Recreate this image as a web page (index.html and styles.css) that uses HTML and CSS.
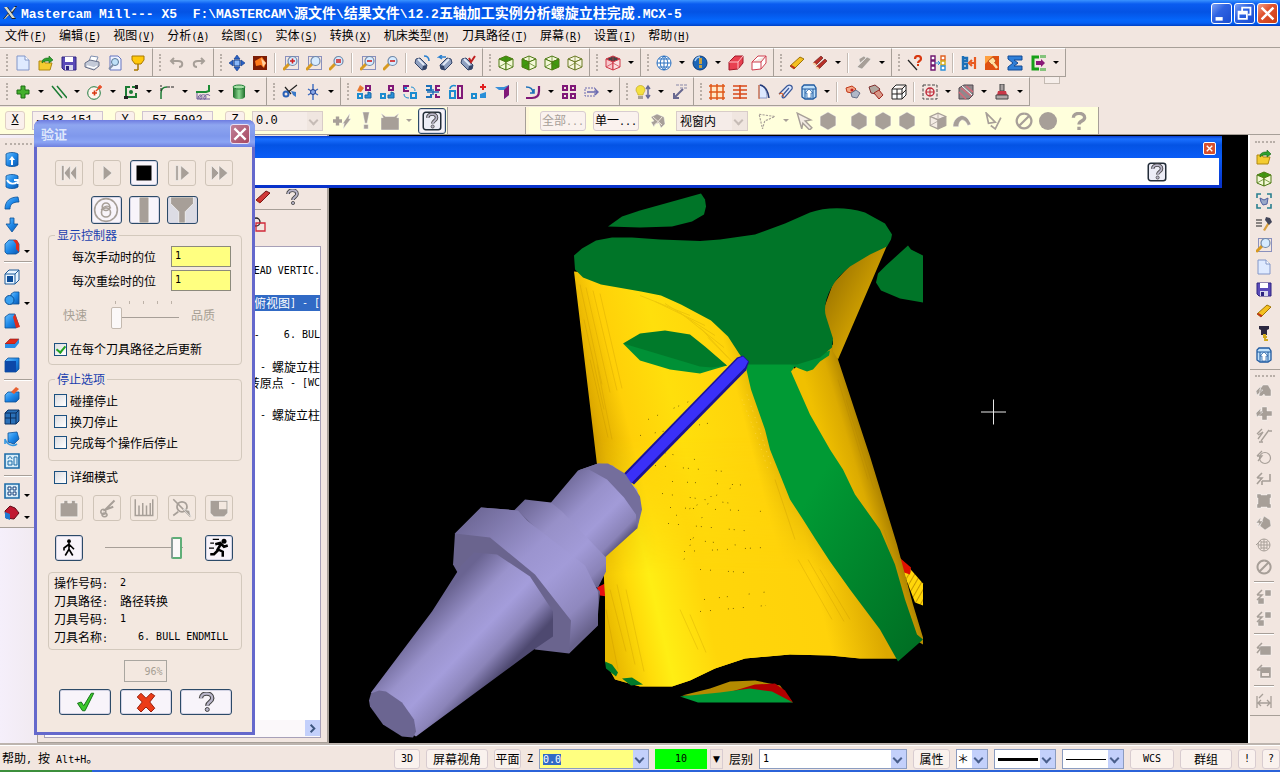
FILE: index.html
```html
<!DOCTYPE html>
<html lang="zh-CN">
<head>
    <meta charset="UTF-8">
    <meta name="viewport" content="width=device-width, initial-scale=1.0">
    <title>Mastercam Mill--- X5</title>
    <link rel="stylesheet" href="styles.css">
</head>
<body>

<header class="titlebar">
    <svg class="app-logo" viewBox="0 0 16 16"><path d="M2 2h4l3 5 4-6h2L10 9l4 5h-4L7 10l-4 4H1l5-6z" fill="#222"/><path d="M2 2h3l8 11h-3zM12 2h2l-4 5-1-1zM2 14l4-5 1 1-4 4z" fill="#d8dccf"/></svg>
    <h1><span class="en">Mastercam Mill--- X5&nbsp; F:\MASTERCAM\</span>源文件<span class="en">\</span>结果文件<span class="en">\12.2</span>五轴加工实例分析螺旋立柱完成<span class="en">.MCX-5</span></h1>
    <div class="win-buttons">
        <button class="win-btn" aria-label="minimize"><svg viewBox="0 0 16 16"><path d="M3 11h6v3H3z" fill="#fff"/></svg></button>
        <button class="win-btn" aria-label="restore"><svg viewBox="0 0 16 16" fill="none" stroke="#fff" stroke-width="1.500"><path d="M6 6V3h7v6h-2M3 6.500h7v6H3zM3 8h7"/></svg></button>
        <button class="win-btn close" aria-label="close"><svg viewBox="0 0 16 16"><path d="M3 3l10 10M13 3L3 13" stroke="#fff" stroke-width="2"/></svg></button>
    </div>
</header>

<nav class="menubar">
    <a href="#">文件<span class="en">(<u>F</u>)</span></a>
    <a href="#">编辑<span class="en">(<u>E</u>)</span></a>
    <a href="#">视图<span class="en">(<u>V</u>)</span></a>
    <a href="#">分析<span class="en">(<u>A</u>)</span></a>
    <a href="#">绘图<span class="en">(<u>C</u>)</span></a>
    <a href="#">实体<span class="en">(<u>S</u>)</span></a>
    <a href="#">转换<span class="en">(<u>X</u>)</span></a>
    <a href="#">机床类型<span class="en">(<u>M</u>)</span></a>
    <a href="#">刀具路径<span class="en">(<u>T</u>)</span></a>
    <a href="#">屏幕<span class="en">(<u>R</u>)</span></a>
    <a href="#">设置<span class="en">(<u>I</u>)</span></a>
    <a href="#">帮助<span class="en">(<u>H</u>)</span></a>
</nav>

<!-- a * after an icon name adds the drop-down arrow, | is a separator -->
<div class="toolbar-row">
    <div class="group" data-icons="new open save print preview pin"></div>
    <div class="group" data-icons="undo redo"></div>
    <div class="group" data-icons="fit repaint | zoomWin zoomTarget zoomEq | unzoomWin unzoom | viewPen1 viewPen2 viewPen3"></div>
    <div class="group" data-icons="cubeTop cubeFront cubeRight cubeIso"></div>
    <div class="group" data-icons="cubeRed*"></div>
    <div class="group" data-icons="globe* ball* solidRed wireRed"></div>
    <div class="group" data-icons="erase eraseAll* | eraseGray*"></div>
    <div class="group" data-icons="lineHelp columns | analyze hammer sigma exit*"></div>
</div>

<div class="toolbar-row">
    <div class="group" data-icons="plus* lines* arc* rect* fillet* spline* cylinder*"></div>
    <div class="group" data-icons="trim breaks*"></div>
    <div class="group" data-icons="xform1 xform2 xform3 mirror scale move3d wedge | offset* nest rolled*"></div>
    <div class="group" data-icons="bulb* arrowNote"></div>
    <div class="group" data-icons="surfGrid surfLines surfHalf surfRoll surfUp* | machine1 machine2 wireCube | target* stock* post*"></div>
    <div class="stub"></div>
</div>

<div class="toolbar-row coords">
    <div class="coord-bar">
        <label class="key" for="cx"><u>X</u></label><input id="cx" class="coord" value="-513.151">
        <label class="key" for="cy"><u>Y</u></label><input id="cy" class="coord" value="-57.5992">
        <label class="key" for="cz"><u>Z</u></label>
        <span class="combo off coord-z"><select id="cz"><option>0.0</option></select></span>
        <span class="flat wide" data-icons="fastPoint bang android*"></span>
        <button class="icon-btn bar-help" data-icon="helpBox" aria-label="help"></button>
    </div>
    <div class="empty-bar"></div>
    <div class="select-bar">
        <button class="pill" disabled>全部<span class="en">...</span></button>
        <button class="pill">单一<span class="en">...</span></button>
        <span class="flat" data-icons="gyroGray"></span>
        <span class="combo off window-mode"><select aria-label="选择方式"><option>视窗内</option></select></span>
        <span class="flat wide" data-icons="polyGray* pointer hexGray"></span>
        <span class="flat wide" data-icons="hexGray hexGray hexGray"></span>
        <span class="flat wide" data-icons="cubeGray bendGray"></span>
        <span class="flat wide" data-icons="pickGray"></span>
        <span class="flat wide" data-icons="noGray discGray"></span>
        <span class="flat wide" data-icons="askGray"></span>
    </div>
</div>

<main class="workspace">
    <aside class="side left">
        <div class="vgroup" data-icons="sUp sTurn sSweep sDown sBox* | sShell sBool* sDraft sThin sBlock | sPush sGrid sRotate sLayout | sTiles* sRed*"></div>
    </aside>

    <section class="manager">
        <div class="manager-tools">
            <div class="flat" data-icons="eraseRed help"></div>
            <div class="flat" data-icons="chainRed"></div>
        </div>
        <ul class="tree">
            <li></li>
            <li><span class="en">HEAD VERTIC.</span></li>
            <li></li>
            <li class="picked">俯视图<span class="en">] - [</span></li>
            <li></li>
            <li><span class="en">-&nbsp;&nbsp;&nbsp; 6. BUL</span></li>
            <li></li>
            <li><span class="en">E - </span>螺旋立柱</li>
            <li>转原点<span class="en"> - [WC</span></li>
            <li></li>
            <li><span class="en">E - </span>螺旋立柱</li>
        </ul>
        <div class="hscroll"><button aria-label="scroll right"><svg viewBox="0 0 16 16"><path d="M6 4l4 4-4 4" fill="none" stroke="#3b557f" stroke-width="2"/></svg></button></div>
    </section>

    <section class="viewport">
        <svg class="scene" viewBox="329 136 919 607">
            <defs>
                <linearGradient id="body" gradientUnits="userSpaceOnUse" x1="577" y1="420" x2="890" y2="340">
                    <stop offset="0" stop-color="#bd8a00"/><stop offset=".06" stop-color="#e0ac00"/><stop offset=".15" stop-color="#ffd008"/>
                    <stop offset=".3" stop-color="#ffdf0c"/><stop offset=".5" stop-color="#ffd40a"/><stop offset=".62" stop-color="#c99a00"/><stop offset="1" stop-color="#c99a00"/>
                </linearGradient>
                <linearGradient id="low" gradientUnits="userSpaceOnUse" x1="600" y1="600" x2="860" y2="540">
                    <stop offset="0" stop-color="#e8b800"/><stop offset=".12" stop-color="#ffdc0a"/><stop offset=".2" stop-color="#ffee14"/>
                    <stop offset=".38" stop-color="#ffd60a"/><stop offset=".8" stop-color="#ffd20a"/><stop offset="1" stop-color="#dba800"/>
                </linearGradient>
                <linearGradient id="fade" x1="0" y1="0" x2="0" y2="1"><stop offset=".45" stop-color="#000"/><stop offset=".75" stop-color="#fff"/></linearGradient>
                <mask id="lowMask"><rect x="560" y="230" width="380" height="460" fill="url(#fade)"/></mask>
                <linearGradient id="right" gradientUnits="userSpaceOnUse" x1="825" y1="450" x2="872" y2="436">
                    <stop offset="0" stop-color="#f0c000"/><stop offset=".5" stop-color="#dcab00"/><stop offset="1" stop-color="#9a7200"/>
                </linearGradient>
                <linearGradient id="inner" gradientUnits="userSpaceOnUse" x1="826" y1="290" x2="868" y2="312">
                    <stop offset="0" stop-color="#a07700"/><stop offset=".6" stop-color="#bf9200"/><stop offset="1" stop-color="#d3a300"/>
                </linearGradient>
                <linearGradient id="slot" x1="0" y1="0" x2="1" y2="1"><stop offset=".4" stop-color="#009a34"/><stop offset="1" stop-color="#006b22"/></linearGradient>
                <linearGradient id="taper" gradientUnits="userSpaceOnUse" x1="428" y1="612" x2="498" y2="678">
                    <stop offset="0" stop-color="#6a6492"/><stop offset=".3" stop-color="#9a93cc"/><stop offset=".55" stop-color="#a49ddb"/><stop offset=".8" stop-color="#8b84b9"/><stop offset="1" stop-color="#4e4970"/>
                </linearGradient>
                <linearGradient id="flange" gradientUnits="userSpaceOnUse" x1="480" y1="510" x2="590" y2="630">
                    <stop offset="0" stop-color="#706a99"/><stop offset=".4" stop-color="#9b94cf"/><stop offset=".6" stop-color="#a29bd8"/><stop offset=".85" stop-color="#8f88be"/><stop offset="1" stop-color="#68628c"/>
                </linearGradient>
                <linearGradient id="collar" gradientUnits="userSpaceOnUse" x1="520" y1="505" x2="605" y2="595">
                    <stop offset="0" stop-color="#6c6694"/><stop offset=".3" stop-color="#9790c8"/><stop offset=".6" stop-color="#a29bd8"/><stop offset=".82" stop-color="#8a83b8"/><stop offset="1" stop-color="#4a4568"/>
                </linearGradient>
                <linearGradient id="neck" gradientUnits="userSpaceOnUse" x1="560" y1="484" x2="625" y2="548">
                    <stop offset="0" stop-color="#6f6998"/><stop offset=".35" stop-color="#9891cb"/><stop offset=".6" stop-color="#a29bd8"/><stop offset=".85" stop-color="#8a83b8"/><stop offset="1" stop-color="#3f3a5c"/>
                </linearGradient>
                <pattern id="stripes" width="5" height="5" patternUnits="userSpaceOnUse" patternTransform="rotate(-60)"><path d="M0 0h5v4H0z" fill="#ffd60a"/><path d="M0 4h5v1H0z" fill="#c89800"/></pattern>
            </defs>

            <!-- loose chips round the part -->
            <path d="M608 227l14-10 18-6 61-17 4 6 1 7-2 8-12 7-20 5-32 1z" fill="#007528"/>
            <path d="M908 246l3 4 12 6v47l-23-4-19-8-5-8 2-9 8-8z" fill="#007528"/>
            <path d="M897 556l12 12 14 16v22l-8-3z" fill="url(#stripes)"/>
            <path d="M897 556l14 12-1 7-6-2z" fill="#e01000"/>
            <path d="M597 588l10-5v14l-7-1z" fill="#e81010"/>
            <path d="M682 696l28-7 20-7 25-1 25 5 12 16z" fill="#b48a00"/>
            <path d="M725 694l30-9 20-1 10 7 8 12z" fill="#b00000"/>
            <path d="M680 697l40-4 30-4 22 3 21 11h-95z" fill="#009a38"/>

            <!-- column -->
            <path d="M574 272L597 465L605 595V662L615 680L640 687H672L690 681L715 669L745 659L790 655L830 656L860 659H898L880 550L790 360L740 300L660 280z" fill="url(#body)"/>
            <path d="M574 272L597 465L605 595V662L615 680L640 687H672L690 681L715 669L745 659L790 655L830 656L860 659H898L880 550L790 360L740 300L660 280z" fill="url(#low)" mask="url(#lowMask)"/>
            <path d="M791 372L800 364L833 345L838 360L870 457L897 545L913 605L923 638V645L898 630L795 400z" fill="url(#right)"/>
            <g fill="none" stroke="#a87a00" opacity=".2">
                <path d="M580 285l22 100M586 288l24 105M593 291l24 100M600 294l22 95M590 360l18 78M597 365l15 75M584 320l20 90"/>
                <path d="M640 296l50 20M655 302l50 24M665 304l50 32M680 313l44 35M700 328l28 30M708 338l24 24"/>
                <path d="M610 590l16 62M617 585l18 80M626 590l18 82M606 610l12 60M680 610l18 40M690 615l16 38M798 560l34 60M808 560l36 62M820 570l30 50M775 480l20 60"/>
                <path d="M846 400l28 90M838 380l30 100M884 530l24 80"/>
            </g>
            <g fill="none" stroke="#4a3800" opacity=".7">
                <path d="M648 420l50-22M655 466l70 6M662 494l70 10M668 524l86 8M684 552l80-4M700 570l60 4M700 612l66-6" stroke-dasharray="1 9 1 17 1 4"/>
                <path d="M640 436l78-14M650 450l45 10M672 482l80 4M670 508l95 4M690 540l50 6M704 600l66-8M676 516l60-30M684 560l30-70" stroke-dasharray="1 14 1 7 1 21"/>
            </g>
            <path d="M747 395l14 40 10 30M742 400l16 40 10 30M835 300l20 2M830 310l24-2M838 318l14 0M855 304l6-8" fill="none" stroke="#ffd84a" stroke-dasharray="1 4 1 6" opacity=".8"/>
            <path d="M887 246l-49 114-5-8v-10l-8-18v-18l8-22 17-18 20-12z" fill="url(#inner)"/>

            <path d="M745 364h52l-6 8 19 43 20 35 13 20 12 25 25 35 15 35 10 35 12 35 6 5-25 22-18-32-30-40-20-28-15-23-12-19-13-20-14-35-6-15-5-20-14-40z" fill="url(#slot)"/>
            <path d="M790 365l40-14-1 5-9 6-7 8-6 2-8-3z" fill="#008f34"/>
            <path d="M574 256l8-7 14-8 16-3 20 0 28 2 40 1.500 20-1.500 35-5 30-11 25-11c15-5 35-6 55 0l20 11 7 11-1 5-4 7-17 8-20 12c-20 15-28 38-24 50l7 22-1 9-12 10-23 7h-50l-8-11-11-17-17-16-30-16-20-9-20-4-40-7-18-7-8-8z" fill="#007528"/>
            <path d="M623 344l17 17 30 9 30 4 10-3 17-5-22-12z" fill="#009036"/>
            <path d="M623 344l17-10 25-3 25 4 15 12 22 19-15 2-12-1-60-18z" fill="#007a2a"/>
            <path d="M605 662l7 3 6 8-2 4-10-8zM622 679l10-1 11 7-12 1z" fill="#007a2a"/>

            <!-- cutter and holder -->
            <path d="M622 476L737 358L743 356L749 362L746 371L634 485z" fill="#1a1296"/>
            <path d="M624 477L738 359L743 357L748 362L745 368L631 484z" fill="#3a30f8"/>
            <path d="M551 503L578 471L598 464L613 466L637 490L641 510L637 529L606 557L586 577L536 517z" fill="url(#neck)"/>
            <path d="M578 471L598 464H608L625 474L640 497L642 510L637 530L636 515L624 498L607 480L589 470z" fill="#746e9c"/>
            <path d="M514 511L525 500L551 503L562 512L606 558V572L598 588H568z" fill="url(#collar)"/>
            <path d="M455 534L481 508L518 511L600 592L597 626L569 654L535 650L457 572L453 565z" fill="#6a648e"/>
            <path d="M455 534L481 508L518 511L527 521L585 566L598 592V626L569 654L571 621L535 575L490 538z" fill="url(#flange)"/>
            <path d="M371 693L432 612L462 565L474 553L497 555L530 577L553 612V637L534 650L416 737L380 715z" fill="url(#taper)"/>
            <path d="M369 701l2-7 8-3 7 1 16 11 12 17 2 12-3 6-11-1-19-12-13-18z" fill="#6b6591"/>

            <path d="M981 412.500h25M993.500 400v25" stroke="#e8e8e8"/>
        </svg>
    </section>

    <aside class="side right">
        <div class="vgroup" data-icons="open cubeTop fitGray tool zoomTarget new save erase drill surfUp"></div>
        <div class="vgroup" data-icons="gCar gPlus gLine gArc gFillet gRect gSolid gGlobe noGray | gPair gPair | gBox gSave | gDim"></div>
    </aside>

    <div class="ribbon-window">
        <button class="ribbon-close" aria-label="close"><svg viewBox="0 0 16 16"><path d="M4 4l8 8M12 4l-8 8" stroke="#fff" stroke-width="2"/></svg></button>
        <div class="ribbon-body"><button class="icon-btn" data-icon="helpBox" aria-label="help"></button></div>
    </div>
</main>

<footer class="statusbar">
    <p class="hint">帮助<span class="en">, </span>按<span class="en"> Alt+H</span>。</p>
    <button class="pill en w-3d">3D</button>
    <button class="pill w-view">屏幕视角</button>
    <button class="pill w-plane">平面</button>
    <label class="en" for="zdepth">Z</label>
    <span class="combo w-z"><input id="zdepth" class="en" value="0.0"></span>
    <button class="color en">10</button>
    <button class="color-drop" aria-label="colors">▼</button>
    <label for="level">层别</label>
    <span class="combo w-level"><select id="level" class="en"><option>1</option></select></span>
    <button class="pill w-attr">属性</button>
    <span class="combo w-point"><select aria-label="point style"><option>＊</option></select></span>
    <span class="combo w-line thick"><select aria-label="line width"><option></option></select></span>
    <span class="combo w-line"><select aria-label="line style"><option></option></select></span>
    <button class="pill en w-wcs">WCS</button>
    <button class="pill w-group">群组</button>
    <button class="pill en w-mark">!</button>
    <button class="pill en w-mark">?</button>
</footer>
<div class="taskbar"></div>

<form class="dialog">
    <div class="dialog-title">
        <h2>验证</h2>
        <button type="button" aria-label="close"><svg viewBox="0 0 16 16"><path d="M3 3l10 10M13 3L3 13" stroke="#fff" stroke-width="2"/></svg></button>
    </div>
    <div class="dialog-body">
        <div class="btn-row">
            <button type="button" class="icon-btn" data-icon="pRewind" disabled aria-label="rewind"></button>
            <button type="button" class="icon-btn" data-icon="pPlay" disabled aria-label="play"></button>
            <button type="button" class="icon-btn" data-icon="pStop" aria-label="stop"></button>
            <button type="button" class="icon-btn" data-icon="pStep" disabled aria-label="step"></button>
            <button type="button" class="icon-btn" data-icon="pFast" disabled aria-label="fast forward"></button>
        </div>
        <div class="btn-row modes">
            <button type="button" class="icon-btn" data-icon="mTurbo" aria-label="turbo"></button>
            <button type="button" class="icon-btn" data-icon="mTool" aria-label="tool"></button>
            <button type="button" class="icon-btn held" data-icon="mHolder" aria-label="holder"></button>
        </div>

        <fieldset class="display">
            <legend>显示控制器</legend>
            <div class="field"><label for="step">每次手动时的位</label><input id="step" class="en" value="1"></div>
            <div class="field"><label for="redraw">每次重绘时的位</label><input id="redraw" class="en" value="1"></div>
            <div class="quality">
                <label for="quality">快速</label>
                <span class="ticks"><input id="quality" type="range" min="0" max="4" value="0" disabled></span>
                <span>品质</span>
            </div>
            <label class="check"><input type="checkbox" checked>在每个刀具路径之后更新</label>
        </fieldset>

        <fieldset class="stops">
            <legend>停止选项</legend>
            <label class="check"><input type="checkbox">碰撞停止</label>
            <label class="check"><input type="checkbox">换刀停止</label>
            <label class="check"><input type="checkbox">完成每个操作后停止</label>
        </fieldset>

        <label class="check verbose"><input type="checkbox">详细模式</label>

        <div class="btn-row">
            <button type="button" class="icon-btn" data-icon="dCamera" disabled aria-label="configure"></button>
            <button type="button" class="icon-btn" data-icon="dCut" disabled aria-label="section"></button>
            <button type="button" class="icon-btn" data-icon="dRuler" disabled aria-label="measure"></button>
            <button type="button" class="icon-btn" data-icon="dZoom" disabled aria-label="zoom"></button>
            <button type="button" class="icon-btn" data-icon="dSave" disabled aria-label="save"></button>
        </div>
        <div class="btn-row speed">
            <button type="button" class="icon-btn" data-icon="walk" aria-label="slow"></button>
            <input type="range" min="0" max="100" value="98" aria-label="speed">
            <button type="button" class="icon-btn" data-icon="run" aria-label="fast"></button>
        </div>

        <dl class="info">
            <dt>操作号码<span class="en">:</span></dt><dd class="en">2</dd>
            <dt>刀具路径<span class="en">:</span></dt><dd>路径转换</dd>
            <dt>刀具号码<span class="en">:</span></dt><dd class="en">1</dd>
            <dt>刀具名称<span class="en">:</span></dt><dd class="en">&nbsp;&nbsp; 6. BULL ENDMILL</dd>
        </dl>

        <input class="percent en" value="96%" disabled aria-label="progress">

        <div class="btn-row answers">
            <button type="button" class="icon-btn" data-icon="ok" aria-label="ok"></button>
            <button type="button" class="icon-btn" data-icon="cancel" aria-label="cancel"></button>
            <button type="button" class="icon-btn" data-icon="help" aria-label="help"></button>
        </div>
    </div>
</form>

<script src="icons.js"></script>
</body>
</html>
```
FILE: styles.css
```css
* {
    box-sizing: border-box;
}

body {
    margin: 0;
    min-height: 100vh;
    display: flex;
    flex-direction: column;
    position: relative;
    overflow: hidden;
    background: #f2e6e0;
    color: #000;
    font: 12px/16px "Noto Sans CJK SC", sans-serif;
}

button, input, select {
    font: inherit;
    color: inherit;
    margin: 0;
    padding: 0;
    border: 0;
    background: none;
    border-radius: 0;
}

svg {
    display: block;
}

/* Latin text runs half as wide as the Chinese characters */
.en {
    font-family: "DejaVu Sans Mono", monospace;
    font-size: 10px;
}

/* Title bar */
.titlebar {
    display: flex;
    align-items: center;
    height: 26px;
    padding: 0 2px;
    background: linear-gradient(#3a93ff 0, #0a5cf0 4px, #0453e4 12px, #0566fb 20px, #0560f5 23px, #0040c4 26px);
    color: #fff;
}

.app-logo {
    width: 16px;
    height: 18px;
}

.titlebar h1 {
    flex: 1;
    margin: 0 0 0 3px;
    font-size: 14px;
    line-height: 20px;
    white-space: pre;
}

.titlebar .en {
    font-family: "Liberation Mono", monospace;
    font-size: 13px;
}

.win-buttons {
    display: flex;
    gap: 2px;
}

.win-btn {
    width: 21px;
    height: 21px;
    border: 1px solid #fff;
    border-radius: 3px;
    background: linear-gradient(135deg, #7fa2f4, #2f63e2 40%, #1a4cd0);
}

.win-btn.close {
    background: linear-gradient(135deg, #f0a08a, #e05430 40%, #c83c14);
}

/* Menus */
.menubar {
    display: flex;
    gap: 12px;
    height: 21px;
    padding: 0 5px;
}

.menubar a {
    color: #000;
    text-decoration: none;
    line-height: 18px;
}

/* Toolbars */
.toolbar-row {
    display: flex;
    height: 30px;
    border-top: 1px solid #a79f98;
}

.toolbar-row + .toolbar-row {
    border-top: 0;
}

.group {
    display: flex;
    align-items: center;
    position: relative;
    height: 29px;
    padding: 0 3px 0 11px;
    border-top: 1px solid #fff;
    border-right: 1px solid #a79f98;
    border-bottom: 1px solid #a79f98;
}

.group::before {
    content: "";
    position: absolute;
    left: 6px;
    top: 5px;
    bottom: 5px;
    border-left: 2px dotted #b9afa8;
}

.tool {
    display: flex;
    justify-content: center;
    align-items: center;
    width: 23px;
    height: 22px;
    flex: none;
}

.tool svg {
    width: 16px;
    height: 16px;
}

.drop {
    width: 13px;
    height: 22px;
    flex: none;
}

.drop::before {
    content: "";
    display: block;
    width: 0;
    margin: 0 4px;
    border: 3px solid transparent;
    border-top-color: #000;
    border-bottom: 0;
}

.sep {
    width: 2px;
    height: 20px;
    margin: 0 3px;
    border-left: 1px solid #c4bab2;
    border-right: 1px solid #fff;
}

.stub {
    width: 16px;
    height: 7px;
    margin-left: 14px;
    border: 1px solid #c4bab2;
    border-top: 0;
    background: #f6eeea;
}

/* Coordinate entry row */
.coords {
    height: 28px;
    border-bottom: 1px solid #a79f98;
}

.coord-bar, .select-bar {
    display: flex;
    align-items: center;
    background: #ffffdc;
    border-right: 1px solid #a79f98;
}

.coord-bar {
    width: 448px;
    padding-left: 5px;
    gap: 7px;
}

.empty-bar {
    width: 78px;
    border-right: 1px solid #a79f98;
}

.select-bar {
    width: 573px;
    padding-left: 11px;
    gap: 7px;
    border-left: 3px solid #fff8d8;
}

.key {
    width: 20px;
    height: 19px;
    border: 1px solid #e0d0c4;
    border-radius: 3px;
    background: #faf0ec;
    text-align: center;
    font: 12px/16px "Liberation Mono", monospace;
}

.coord {
    width: 71px;
    height: 19px;
    margin-right: 5px;
    padding-left: 2px;
    border: 1px solid #cfc4d0;
    background: #f8f0ec;
    font: 12px/16px "Liberation Mono", monospace;
}

.coord-z {
    width: 71px;
    font-family: "Liberation Mono", monospace;
}

.bar-help {
    margin-left: -4px;
}

.flat {
    display: flex;
    align-items: center;
}

.wide .tool {
    width: 24px;
}

.wide svg {
    width: 18px;
    height: 18px;
}

.wide .drop::before {
    border-top-color: #a79f98;
}

.pill {
    height: 20px;
    border: 1px solid #d8ccd0;
    border-radius: 3px;
    background: #faf2ee;
    white-space: nowrap;
    line-height: 16px;
}

.pill:disabled {
    color: #a79f98;
}

.select-bar .pill {
    width: 46px;
}

.window-mode {
    width: 72px;
}

/* Combo boxes */
.combo {
    display: inline-block;
    position: relative;
    height: 20px;
    border: 1px solid #8b9cc0;
    background: #fff;
    flex: none;
}

.combo select, .combo input {
    display: block;
    appearance: none;
    width: 100%;
    height: 18px;
    padding-left: 3px;
    outline: 0;
}

.combo::before {
    content: "";
    position: absolute;
    top: 0;
    right: 0;
    width: 15px;
    height: 18px;
    background: #c3d0fb;
    pointer-events: none;
}

.combo::after {
    content: "";
    position: absolute;
    top: 5px;
    right: 5px;
    width: 5px;
    height: 5px;
    border: solid #4a5f8c;
    border-width: 0 2px 2px 0;
    transform: rotate(45deg);
    pointer-events: none;
}

.combo.off {
    border-color: #d8ccc8;
    background: #f5ece8;
}

.combo.off::before {
    background: #f0e6e0;
}

.combo.off::after {
    border-color: #c6bcb6;
}

/* Workspace */
.workspace {
    flex: 1;
    display: flex;
    min-height: 0;
    position: relative;
}

.side {
    flex: none;
    padding-top: 1px;
}

.left {
    width: 37px;
    padding-top: 3px;
    background: linear-gradient(90deg, #f5effb, #f1eaf0);
}

.right {
    width: 32px;
    border-left: 2px solid #fff;
}

.vgroup {
    display: grid;
    grid-template-columns: 24px 12px;
    position: relative;
    padding: 10px 0 3px;
    border-bottom: 1px solid #a79f98;
    background: #f2e6e0;
}

.vgroup::before {
    content: "";
    position: absolute;
    top: 5px;
    left: 5px;
    right: 5px;
    border-top: 2px dotted #b9afa8;
}

.right .vgroup {
    grid-template-columns: 28px;
}

.vgroup .tool {
    grid-column: 1;
}

.right .tool {
    width: 28px;
}

.vgroup .drop {
    grid-column: 2;
    padding-top: 9px;
}

.vgroup .drop::before {
    margin: 0;
}

.vgroup .sep {
    grid-column: 1 / -1;
    width: auto;
    height: 2px;
    margin: 3px 4px;
    border: 0;
    border-top: 1px solid #a79f98;
    border-bottom: 1px solid #fff;
}

.manager {
    flex: none;
    display: flex;
    flex-direction: column;
    width: 292px;
    padding: 49px 6px 4px;
    border: 1px solid #a79f98;
    border-width: 0 2px 1px 1px;
}

.manager-tools {
    height: 62px;
    padding-left: 207px;
}

.manager-tools .flat:first-child {
    height: 26px;
    gap: 6px;
    border-bottom: 1px solid #a79f98;
}

.manager-tools .flat:last-child {
    height: 30px;
    margin-left: -4px;
}

.tree {
    flex: 1;
    margin: 0;
    padding: 0;
    overflow: hidden;
    list-style: none;
    border: 1px solid #a7a0b8;
    border-bottom: 0;
    background: #fff;
}

.tree li {
    display: flex;
    align-items: center;
    justify-content: flex-end;
    height: 16px;
    white-space: pre;
}

.tree .picked {
    background: #316ac5;
    color: #fff;
}

.hscroll {
    height: 18px;
    border: 1px solid #a7a0b8;
    border-top: 0;
    background: #fbf8fa;
    text-align: right;
}

.hscroll button {
    width: 15px;
    height: 16px;
    background: #c3d0fb;
}

.viewport {
    flex: 1;
    min-width: 0;
    background: #000;
}

.scene {
    width: 100%;
    height: 100%;
}

/* Ribbon bar floating over the workspace */
.ribbon-window {
    position: absolute;
    top: 1px;
    left: 40px;
    right: 58px;
    height: 52px;
    padding: 0 3px 3px 0;
    background: linear-gradient(#0a3ccc 0, #1a70ff 3px, #0453e4 9px, #0a5cf5 21px, #0830c8 52px);
}

.ribbon-close {
    position: absolute;
    top: 6px;
    right: 6px;
    width: 13px;
    height: 13px;
    border: 1px solid #fff;
    border-radius: 2px;
    background: #d8502c;
}

.ribbon-body {
    height: 27px;
    margin-top: 22px;
    padding: 3px 51px 0 0;
    background: #fff;
}

.ribbon-body .icon-btn, .bar-help {
    width: 22px;
    height: 21px;
    border: 0;
    background: none;
    box-shadow: none;
}

.ribbon-body .icon-btn {
    margin-left: auto;
}

.ribbon-body svg, .bar-help svg {
    width: 24px;
    height: 24px;
    flex: none;
}

/* Status bar */
.statusbar {
    display: flex;
    align-items: center;
    gap: 6px;
    height: 27px;
    padding-top: 3px;
    border-top: 2px solid #bdb4ae;
    box-shadow: inset 0 1px #fff;
    white-space: nowrap;
}

.hint {
    flex: 1;
    margin: 0;
    padding-left: 2px;
}

.w-3d { width: 26px; }
.w-view { width: 62px; }
.w-plane { width: 27px; }
.w-z { width: 110px; }
.w-level { width: 148px; }
.w-attr { width: 37px; }
.w-point { width: 32px; }
.w-line { width: 62px; }
.w-wcs { width: 44px; }
.w-group { width: 52px; }
.w-mark { width: 18px; }

.w-z {
    background: #ffff80;
}

.w-z input::selection {
    background: #316ac5;
    color: #fff;
}

.w-point select {
    padding: 0;
}

.w-line select {
    padding: 0;
    background: linear-gradient(#000, #000) 3px 9px / 40px 1px no-repeat;
}

.thick select {
    background-size: 40px 3px;
    background-position: 3px 8px;
}

.color {
    width: 52px;
    height: 20px;
    background: #00ff00;
}

.color-drop {
    width: 13px;
    height: 20px;
    margin-left: -3px;
    border: 1px solid #d8ccd0;
    font-size: 9px;
    font-family: "DejaVu Sans", sans-serif;
}

.taskbar {
    height: 2px;
    background: linear-gradient(90deg, #3c8f3c 92px, #2b63d9 92px);
}

/* Verify dialog */
.dialog {
    position: absolute;
    top: 120px;
    left: 34px;
    width: 221px;
    border: 3px solid #6468cc;
    border-top: 0;
    border-radius: 7px 7px 0 0;
    background: #f3e8e0;
}

.dialog-title {
    display: flex;
    align-items: center;
    justify-content: space-between;
    height: 27px;
    margin: 0 -3px;
    padding: 0 5px 0 7px;
    border-radius: 7px 7px 0 0;
    background: linear-gradient(#6e7ce0, #8fa6f0 5px, #7f98ec 16px, #8ba4f4 22px, #6f80de);
}

.dialog-title h2 {
    margin: 0;
    color: #dfe8fc;
    font-size: 13px;
    line-height: 18px;
}

.dialog-title button {
    width: 20px;
    height: 20px;
    border: 1px solid #e8e0f4;
    border-radius: 3px;
    background: linear-gradient(135deg, #c08098, #a84860);
}

.dialog-body {
    padding: 13px 10px 17px 11px;
}

.btn-row {
    display: flex;
    justify-content: space-between;
    padding: 0 9px 0 7px;
}

.icon-btn {
    display: flex;
    align-items: center;
    justify-content: center;
    width: 28px;
    height: 26px;
    border: 1px solid #2c4a68;
    border-radius: 3px;
    background: #f8f4fa;
    box-shadow: inset 0 0 0 1px #d4d4e4;
}

.icon-btn svg {
    width: 20px;
    height: 20px;
}

.icon-btn:disabled {
    border-color: #cfc4b8;
    background: none;
    box-shadow: none;
}

.modes {
    justify-content: center;
    gap: 7px;
    margin-top: 10px;
}

.modes .icon-btn {
    width: 31px;
    height: 28px;
}

.modes svg {
    width: 26px;
    height: 26px;
}

.modes .held {
    background: #dcdce4;
}

fieldset {
    min-width: 0;
    margin: 5px 0 0;
    border: 1px solid #d3c9bd;
    border-radius: 4px;
}

legend {
    margin-left: 1px;
    padding: 0 2px;
    color: #1a3fae;
    line-height: 12px;
}

.display {
    padding: 5px 10px 7px 5px;
}

.field {
    display: flex;
    align-items: center;
    justify-content: space-between;
    margin-bottom: 3px;
    padding-left: 18px;
}

.field input {
    width: 60px;
    height: 21px;
    padding: 0 3px 3px;
    border: 1px solid #8c8a7c;
    background: #ffff80;
}

.quality {
    display: flex;
    align-items: center;
    height: 32px;
    margin: 8px 0 10px;
    padding-left: 9px;
    gap: 12px;
    color: #a79f94;
}

.ticks {
    width: 68px;
    margin-left: 12px;
    padding-top: 6px;
    background: repeating-linear-gradient(90deg, #bdb2a8 0 1px, transparent 1px 14px) 4px 0 / 58px 3px no-repeat;
}

input[type="range"] {
    display: block;
    appearance: none;
    width: 100%;
    height: 22px;
    background: linear-gradient(#a79f98, #a79f98) 0 10px / 100% 1px no-repeat;
}

input[type="range"]::-webkit-slider-thumb {
    appearance: none;
    width: 11px;
    height: 22px;
    border: 2px solid #5fae78;
    border-left-color: #8a9a98;
    border-radius: 2px;
    background: #fbf8f8;
}

input[type="range"]:disabled::-webkit-slider-thumb {
    border: 1px solid #c4bab0;
}

.check {
    display: flex;
    align-items: center;
    gap: 3px;
    height: 16px;
    white-space: nowrap;
}

.check input {
    appearance: none;
    width: 13px;
    height: 13px;
    border: 1px solid #1c5180;
    background: linear-gradient(135deg, #dcdce0, #fff);
}

.check input:checked::before {
    content: "";
    display: block;
    width: 4px;
    height: 7px;
    margin: 0 0 0 3px;
    border: solid #21a121;
    border-width: 0 2px 2px 0;
    transform: rotate(40deg);
}

.stops {
    margin-top: 8px;
    padding: 5px 5px 7px;
}

.stops .check {
    height: 21px;
}

.verbose {
    margin: 8px 0 10px 6px;
}

.speed {
    margin-top: 14px;
}

.speed input {
    width: 78px;
    align-self: center;
}

.info {
    display: grid;
    grid-template-columns: 66px 1fr;
    grid-auto-rows: 18px;
    margin: 11px 0 10px;
    padding: 1px 0 3px 5px;
    border: 1px solid #d3c9bd;
    border-radius: 4px;
    line-height: 18px;
    white-space: nowrap;
}

.info dd {
    margin: 0;
}

.percent {
    display: block;
    width: 43px;
    height: 22px;
    margin: 0 auto 7px;
    padding: 0 3px;
    border: 1px solid #a9a6a0;
    color: #a79f94;
    text-align: right;
}

.answers {
    padding: 0 10px 0 11px;
}

.answers .icon-btn {
    width: 52px;
}
```
FILE: icons.js
```js
// every icon is drawn on a 16 x 16 grid
const G = '#a79f98';

function cube(stroke, top, front, right) {
    return `<g stroke="${stroke}" stroke-linejoin="round"><path d="M1 4l7-3 7 3-7 3z" fill="${top}"/><path d="M1 4l7 3v8l-7-3z" fill="${front}"/><path d="M15 4L8 7v8l7-3z" fill="${right}"/><path d="M1 12l7-4 7 4M8 1v6" fill="none" stroke-width=".7"/></g>`;
}
function lens(sign, box) {
    return (box ? '<path d="M2.500 1.500h13v13h-13z" fill="none" stroke="#223a9a" stroke-dasharray="1 1"/>' : '') +
        '<path d="M1 14l5-5" stroke="#d89a20" stroke-width="3" stroke-linecap="round"/><circle cx="9.500" cy="6" r="4.500" fill="#d6ebff" stroke="#7088a8" stroke-width="1.200"/>' + sign;
}
function eraser(c, d) {
    return `<path d="M1 11L11 2l4 2L5 14z" fill="${c}" stroke="${d}"/><path d="M1 11l4 3 1.500-1.500-4-2.500z" fill="#c03020"/>`;
}
function pen(extra) {
    return '<path d="M3 10L10 3l4 1 1 4-7 7-4-1z" fill="#8fa0c0" stroke="#334468"/><path d="M6 10l6-6" stroke="#e4ecf8" stroke-width="1.800"/><path d="M3 10l4 1 1 4-4-1z" fill="#334468"/>' + extra;
}
function squares(a, b, extra) {
    return `<path d="M10 2h4v4h-4z" fill="none" stroke="${a}" stroke-width="2"/><path d="M2 10h4v4H2z" fill="none" stroke="${b}" stroke-width="2"/><path d="M9 14v-3h3V8l3 1v5z" fill="#2a8fd8" stroke="#1769a8"/>` + (extra || '');
}
function blue(d, extra) {
    return `<path d="${d}" fill="url(#bluefill)" stroke="#0a5098" stroke-width=".8"/>` + (extra || '');
}
function gray(d) {
    return `<path d="${d}" fill="${G}" stroke="#fff" stroke-width=".4"/>`;
}
function grayLine(d, w) {
    return `<path d="${d}" fill="none" stroke="${G}" stroke-width="${w || 1.3}"/>`;
}
const bolt = 'M0 8l5-6-1 4h3l-5 6 1-4z';
const question = '<path d="M4 5c0-5 9-5 9 0 0 3-4 3-4 6" fill="none" stroke="#444" stroke-width="3.600"/><path d="M4 5c0-5 9-5 9 0 0 3-4 3-4 6" fill="none" stroke="#b8b4c8" stroke-width="1.800"/><circle cx="9" cy="14" r="1.600" fill="#b8b4c8" stroke="#444" stroke-width=".8"/>';
const page = '<path d="M2 1h8l4 4v10H2z" fill="#dfeaff" stroke="#8296c8"/><path d="M10 1v4h4" fill="#fff" stroke="#8296c8"/>';

const icons = {
    new: page,
    open: '<path d="M1 6h5l1 2h7l-2 7H1z" fill="#f4cc30" stroke="#b08810"/><path d="M4 8c0-5 4-5 7-5V1l4 4-4 3V6c-3 0-5 0-7 2z" fill="#2ea02e" stroke="#146414" stroke-width=".6"/>',
    save: '<path d="M1 2h14v13H3l-2-2z" fill="#5a4ab8" stroke="#2e2480"/><path d="M4 2h8v5H4z" fill="#fff"/><path d="M4 10h8v5H4z" fill="#d8d8ec"/><path d="M5 11h3v4H5z" fill="#2e2480"/>',
    print: '<path d="M5 6l2-5 7 1-2 5z" fill="#fff" stroke="#8090b0"/><path d="M1 8l5-3 9 2v4l-5 4-9-3z" fill="#c4cad8" stroke="#687088"/><path d="M3 11l7 2 3-2" fill="none" stroke="#fff" stroke-width="1.500"/>',
    preview: '<path d="M3 1h8l3 3v11H3z" fill="#eef2ff" stroke="#6474c0"/><circle cx="8" cy="7" r="3.500" fill="#bfe0f8" stroke="#5a7898"/><path d="M2 14l4-4" stroke="#8090a8" stroke-width="2"/>',
    pin: '<path d="M2 1h12v4l-3 4H5L2 5z" fill="#ffc80a" stroke="#a87800"/><path d="M8 9v6M4 15h4" stroke="#a87800" stroke-width="1.500"/>',
    undo: grayLine('M3 6h7c6 0 5 6 1 6M6 3L3 6l3 3', 2),
    redo: grayLine('M13 6H7c-6 0-5 6-1 6M10 3l3 3-3 3', 2),
    fit: '<path d="M8 0l3 4H5zM8 16l3-4H5zM0 8l4-3v6zM16 8l-4-3v6z" fill="#2a62c8" stroke="#123c88" stroke-width=".6"/><path d="M5 5h6v6H5z" fill="#8ab8f8" stroke="#123c88"/>',
    repaint: '<path d="M1 1h14v14H1z" fill="#7c1c04"/><path d="M3 6l7-4 4 6-2 5-3-3-5 1z" fill="#ff7a1a"/><path d="M9 3l5 5-3 4z" fill="#ffd0a0"/>',
    zoomWin: lens('<path d="M9.500 3.500v5M7 6h5" stroke="#d02020" stroke-width="1.600"/>', true),
    zoomTarget: lens('', true),
    zoomEq: lens('<path d="M7 5h5M7 7h5" stroke="#d02020" stroke-width="1.300"/>'),
    unzoomWin: lens('<path d="M7 6h5" stroke="#d02020" stroke-width="1.600"/>', true),
    unzoom: lens('<path d="M7 6h5" stroke="#d02020" stroke-width="1.600"/>'),
    viewPen1: '<g transform="matrix(-1 0 0 1 16 0)">' + pen('') + '</g><path d="M10 1c4 0 5 2 5 5" fill="none" stroke="#2a80d0" stroke-width="1.500"/>',
    viewPen2: pen('<path d="M9 2H2l3-2M2 2l3 2" fill="none" stroke="#2a80d0" stroke-width="1.500"/>'),
    viewPen3: '<g transform="matrix(-1 0 0 1 16 0)">' + pen('') + '</g><path d="M9 3l2 4 4-6" fill="none" stroke="#c02020" stroke-width="2"/>',
    cubeTop: cube('#4e7a14', '#3f9a10', '#f4f8d8', '#f4f8d8'),
    cubeFront: cube('#4e7a14', '#f4f8d8', '#3f9a10', '#f4f8d8'),
    cubeRight: cube('#4e7a14', '#f4f8d8', '#f4f8d8', '#3f9a10'),
    cubeIso: cube('#6a7a24', '#f8f6e0', '#f8f6e0', '#f8f6e0'),
    cubeRed: cube('#d03848', '#444', '#f8c8cc', '#fbe0e0'),
    globe: '<circle cx="8" cy="8" r="7" fill="#fff" stroke="#2a70c0"/><path d="M8 1v14M1 8h14M3 4h10M3 12h10M8 1C3 5 3 11 8 15M8 1c5 4 5 10 0 14" fill="none" stroke="#2a70c0"/>',
    ball: '<circle cx="8" cy="8" r="7" fill="#1c66b8" stroke="#0c3c78"/><path d="M7 3h3v6H7zM7 10h3v3H7z" fill="#c8a040"/><path d="M3 6c1-3 3-4 5-4" fill="none" stroke="#a8d0f8" stroke-width="1.500"/>',
    solidRed: '<path d="M1 7l6-6h8v7l-5 6-9 1z" fill="#e84050" stroke="#a01828"/><path d="M1 7h9l5-6M10 7v7" fill="none" stroke="#ffc0c4"/>',
    wireRed: '<path d="M1 7l6-6h8v7l-5 6-9 1zM1 7h9l5-6M10 7v7" fill="#fff" stroke="#d04050"/>',
    erase: eraser('#f4c020', '#a07408'),
    eraseRed: eraser('#d03838', '#701414'),
    eraseAll: '<path d="M1 8l8-7 2 2-7 7zM4 12l9-8 2 2-8 8z" fill="#b83028" stroke="#601010" stroke-width=".6"/><path d="M1 8l3 2M4 12l3 2" stroke="#f8d0a0" stroke-width="2"/>',
    eraseGray: gray('M1 12L11 2l4 2L6 14zM3 4l5-3 2 2-6 5z'),
    lineHelp: '<path d="M1 5l9 10" stroke="#222" stroke-width="1.200"/><path d="M8 4c0-4 6-4 6 0 0 2-3 2-3 4" fill="none" stroke="#d83810" stroke-width="2.200"/><path d="M10 9h2v2h-2z" fill="#d83810"/>',
    columns: '<path d="M1 1h4v4H1zM1 6h4v4H1zM1 11h4v4H1z" fill="#fff" stroke="#701870" stroke-width="1.400"/><path d="M11 1h4v4h-4z" fill="#fff" stroke="#e06020" stroke-width="1.400"/><path d="M11 6h4v4h-4z" fill="#fff" stroke="#d0a810" stroke-width="1.400"/><path d="M11 11h4v4h-4z" fill="#fff" stroke="#2a8fd8" stroke-width="1.400"/><path d="M5 8h5M8 6l2 2-2 2" fill="none" stroke="#2a8fd8"/>',
    analyze: '<path d="M2 1v14M2 3h4v3H2M2 9h4v4H2" fill="none" stroke="#1c70b8" stroke-width="2.400"/><path d="M14 2v12M14 8h-4M11 5L8 8l3 3" fill="none" stroke="#e85a20" stroke-width="2.200"/>',
    hammer: '<path d="M1 1h14v14H1z" fill="#e05010"/><path d="M1 1h8L1 9z" fill="#ffa040"/><path d="M4 6l5-4 3 4-4 4z" fill="#ffe0a0" stroke="#a03000" stroke-width=".6"/><path d="M9 8l4 5" stroke="#ffe0a0" stroke-width="2.500"/>',
    sigma: '<path d="M1 1h14v4H7l4 3-4 3h8v4H1v-3l5-4-5-4z" fill="#2f7fd8" stroke="#134a94"/>',
    exit: '<path d="M9 2H3v12h6" fill="none" stroke="#18a018" stroke-width="3"/><path d="M6 6h5V4l4 4-4 4v-2H6z" fill="#8a1878"/><path d="M11 0v3M13 0v3M15 0v3M11 13v3M13 13v3M15 13v3" stroke="#18a018"/>',
    plus: '<path d="M6 2h4v4h4v4h-4v4H6v-4H2V6h4z" fill="#44b02c" stroke="#1c6c14"/>',
    lines: '<path d="M1 2l10 12M6 2l10 12" stroke="#1c7c34" stroke-width="1.500"/>',
    arc: '<circle cx="7" cy="9" r="6.300" fill="#fff4ec" stroke="#207c40"/><path d="M5 9h5M7.500 6.500v5" stroke="#d83810" stroke-width="1.600"/><path d="M9 7l4-4M13 1v4M11 3h4" stroke="#e84820" stroke-width="1.400"/>',
    rect: '<path d="M7 3H3v10h10V9M9 3h3" fill="none" stroke="#1c7c34" stroke-width="2"/><path d="M1 12h4v3H1zM12 1h3v4h-3z" fill="#222"/><circle cx="8" cy="8" r="2" fill="#1c7c34"/>',
    fillet: '<path d="M2 15V9c0-4 2-6 6-6" fill="none" stroke="#1c7c34" stroke-width="1.500"/><path d="M2 7V1M8 3h8" stroke="#222" stroke-dasharray="3 1"/>',
    spline: '<path d="M1 8h10l3-1V1" fill="none" stroke="#1c8c34" stroke-width="2"/><path d="M2 15V9M3 15c0-5 4-5 4-2s-3 3-2 0 6-3 6 0-3 3-2 0 5-3 6-1M2 15h13" fill="none" stroke="#6a5a98"/>',
    cylinder: '<path d="M2 3v10c2 3 10 3 12 0V3z" fill="url(#greenfill)"/><ellipse cx="8" cy="3" rx="6" ry="2" fill="#a8e0a8" stroke="#1c7c34"/>',
    trim: '<path d="M15 1L5 9M3 3l6 7" stroke="#222" stroke-width="1.200"/><circle cx="4" cy="10" r="2.500" fill="none" stroke="#2a62b8" stroke-width="2"/><path d="M9 7l5 1v5l-3-2z" fill="#3a7ac8"/>',
    breaks: '<path d="M8 0v16M3 5l10 6M13 5L3 11" stroke="#3a6ac0" stroke-width="1.400"/><circle cx="8" cy="8" r="2.500" fill="#88a8e8" stroke="#203c88"/>',
    xform1: squares('#801878', '#1c8cd0', '<path d="M1 7l3-6 4 3-3 4z" fill="#e87830"/>'),
    xform2: squares('#801878', '#1c8cd0'),
    xform3: '<path d="M7 2H2v5h5" fill="none" stroke="#801878" stroke-width="2"/><path d="M2 4h3M9 9h5v5H9z" fill="none" stroke="#1c8cd0" stroke-width="2"/><path d="M9 3c3 0 4 2 4 4M2 10c0 3 2 4 5 4" fill="none" stroke="#1c8cd0"/>',
    mirror: '<path d="M1 2h5v4H1M1 13h5v-3" fill="none" stroke="#1c70b8" stroke-width="2"/><path d="M15 2h-4v4h4M15 13h-4v-3" fill="none" stroke="#801878" stroke-width="2"/><path d="M2 8h12M8 5v6" stroke="#1c70b8" stroke-width="1.400"/>',
    scale: '<path d="M10 2h4v12h-4z" fill="none" stroke="#801878" stroke-width="2"/><path d="M2 7h5v7H2z" fill="none" stroke="#1c8cd0" stroke-width="2"/><path d="M2 5c0-3 3-4 6-3" fill="none" stroke="#1c8cd0" stroke-width="1.500"/>',
    move3d: '<path d="M1 10h4v4H1z" fill="none" stroke="#1c8cd0" stroke-width="2"/><path d="M9 14v-4l6-2v6z" fill="#2a8fd8"/><path d="M12 0v6M9 3h6" stroke="#e02020" stroke-width="2"/>',
    wedge: '<path d="M1 3h9l5-2v10l-5 4V6H5z" fill="#3a8fd8"/><path d="M10 6l5-5v10l-5 4z" fill="#801878"/>',
    offset: '<path d="M1 14h6c5 0 7-2 7-7V2" fill="none" stroke="#801878" stroke-width="2.200"/><path d="M1 3c4 0 7 2 7 6M5 9h4V5" fill="none" stroke="#1c70b8" stroke-width="1.600"/>',
    nest: '<path d="M2 2h4v4H2zM10 2h4v4h-4zM2 10h4v4H2zM10 10h4v4h-4z" fill="none" stroke="#801878" stroke-width="2"/>',
    rolled: '<path d="M1 4h10v8H1z" fill="none" stroke="#6a6ab0" stroke-dasharray="2 1"/><path d="M3 8h11M11 5l3 3-3 3" fill="none" stroke="#6a6ab0" stroke-width="1.400"/>',
    bulb: '<path d="M1 6c0-6 9-6 9 0 0 2-2 3-2 5H3c0-2-2-3-2-5z" fill="#f4e040" stroke="#b8a010" stroke-width=".6"/><path d="M3 12h5v3H3z" fill="#a8a098"/><path d="M13 3v10M11 5l2-3 2 3M11 11l2 3 2-3" fill="none" stroke="#666a98" stroke-width="1.500"/>',
    arrowNote: '<path d="M12 5L3 14M3 9v5h5" fill="none" stroke="#686890" stroke-width="2"/><path d="M5 1h11M9 4h7" stroke="#8888a8" stroke-dasharray="3 1"/>',
    surfGrid: '<path d="M2 2h12v12H2z" fill="#ffe8c8"/><path d="M2 0v16M8 0v16M14 0v16M0 2h16M0 8h16M0 14h16" stroke="#e05818" stroke-width="1.500"/>',
    surfLines: '<path d="M1 2h14M1 6h14M1 10h14M1 14h14M8 1v14" stroke="#d84818" stroke-width="1.600"/>',
    surfHalf: '<path d="M4 1c6 1 8 6 8 13H4z" fill="#dce8ff" stroke="#8898c8"/><path d="M5 1c6 1 8 6 9 13" fill="none" stroke="#223a78" stroke-width="1.500"/><path d="M4 1v14" stroke="#e05818"/>',
    surfRoll: '<path d="M1 10L9 2c3-2 6 0 5 3l-7 8c-2 2-4 0-2-2l6-7" fill="#dce8ff" stroke="#3a5898" stroke-width="1.200"/><path d="M1 10l3-1 2 4" fill="none" stroke="#e05818"/>',
    surfUp: '<path d="M3 1h10l2 3v9l-3 2H4l-3-2V3z" fill="#c0e0fa" stroke="#1f5aa0" stroke-width="1.300"/><path d="M1 5h14M4 5v9M12 5v9" stroke="#1f5aa0"/><path d="M8 5l4 4h-2v5H6V9H4z" fill="#fff" stroke="#1f5aa0" stroke-width=".7"/>',
    machine1: '<path d="M1 4l6-2 4 3-4 4-5-1z" fill="#f4a888" stroke="#c03818"/><path d="M6 9l5-3 4 3-3 5-5-1z" fill="#b0b8c8" stroke="#687088"/><circle cx="7" cy="6" r="1.600" fill="#c02020"/>',
    machine2: '<path d="M1 3l6-2 5 4-4 5-5-1z" fill="#b0a8a0" stroke="#803030"/><path d="M6 9l5-3 4 5-4 4z" fill="#d89888" stroke="#a02820"/>',
    wireCube: '<path d="M1 5l4-4h10v10l-4 4H1zM1 5h10l4-4M11 5v10M6 5v10M1 10h10l4-4" fill="#fff" stroke="#222"/>',
    target: '<path d="M1 1h14v14H1z" fill="none" stroke="#444" stroke-dasharray="3 1.500"/><circle cx="8" cy="8" r="4" fill="none" stroke="#c02838" stroke-width="1.400"/><path d="M8 4v8M4 8h8" stroke="#c02838"/>',
    stock: '<path d="M1 4l5-3h9v10l-4 4H1z" fill="#90888c" stroke="#504850"/><path d="M3 4l10 8M1 8l7 7M8 2l7 6" stroke="#d86878" stroke-width="1.500"/><path d="M4 2l10 9" stroke="#fff"/>',
    post: '<path d="M6 0h4v7H6z" fill="#a8a0a0" stroke="#444"/><path d="M4 7h8l1 4H3z" fill="#c83848"/><path d="M2 11h12v4H2z" fill="#b0a8a8" stroke="#444"/>',
    fastPoint: `<path d="M0 8h8M4 4v8" stroke="${G}" stroke-width="3"/>` + gray('M8 11l7-10-1 5h2l-7 9 1-5z'),
    bang: gray('M5 0h6l-2 10H7zM6 11h4v4H6z'),
    android: gray('M0 5h2L0 1l4 3h8l4-3-2 4h2v11H0z'),
    helpBox: '<rect x="1" y="1" width="14" height="14" rx="2" fill="#ececf6" stroke="#222c38" stroke-width="1.200"/><g transform="translate(1.500 1.500) scale(.78)">' + question + '</g>',
    gyroGray: gray('M1 4l6-3 7 3 1 7-4 4-2-5-4 1-1 3-3-5 3-1z') + '<path d="M3 4l9 8M12 4L5 12" stroke="#efe6dc"/>',
    polyGray: '<path d="M1 2l14 2-9 4-2 7z" fill="none" stroke="#a79f98" stroke-dasharray="2 1"/>',
    pointer: '<path d="M2 1l12 6-5 1 6 6-2 2-6-6-1 5z" fill="#f4ece4" stroke="#a79f98" stroke-width="1.300"/>',
    hexGray: gray('M8 0l7 4v8l-7 4-7-4V4z'),
    cubeGray: cube(G, '#f4ece4', '#f4ece4', G),
    bendGray: gray('M0 13c0-6 4-9 8-10 4 1 6 3 8 8l-3 1c-1-3-3-5-5-5-2 1-3 3-3 6z'),
    pickGray: grayLine('M2 1l8 8-6 1zM6 12l4 3 5-10', 1.5),
    noGray: grayLine('M8 1.500a6.500 6.500 0 1 0 .1 0M3.500 12.500l9-9', 2),
    discGray: `<circle cx="8" cy="8" r="8" fill="${G}"/>`,
    askGray: grayLine('M3 5c0-5 10-5 10 0 0 3-5 3-5 6M8 13v3', 3),
    help: question,
    chainRed: '<circle cx="5" cy="5" r="4" fill="none" stroke="#222" stroke-width="1.300"/><path d="M5 6h9v8H5z" fill="none" stroke="#d02838" stroke-width="1.300"/>',

    sUp: blue('M2 3c3-2 9-2 12 0v11c-3 2-9 2-12 0z', '<path d="M8 5l3 4H9v5H7V9H5z" fill="#fff"/>'),
    sTurn: blue('M2 3c3-2 9-2 12 0v11c-3 2-9 2-12 0z', '<path d="M3 7c3 5 8 4 10 2M10 7h4v4" fill="none" stroke="#fff" stroke-width="1.800"/>'),
    sSweep: blue('M1 14C1 6 6 2 14 2l1 5c-6 0-9 2-9 7z'),
    sDown: blue('M6 1h4v6h4l-6 8-6-8h4z'),
    sBox: blue('M1 5l4-4h7l3 4v8l-3 2H3l-2-2z', '<path d="M9 1h4l2 4v8l-3-3V5z" fill="#e02c1c"/>'),
    sShell: '<path d="M1 5l4-4h10v10l-4 4H1z" fill="#e8f4ff" stroke="#1c5a98"/><path d="M1 5h10v10M11 5l4-4" fill="none" stroke="#1c5a98"/><path d="M3 7h6v6H3z" fill="#0c4c98"/>',
    sBool: blue('M7 3l3-2h5v12H7z', '<circle cx="5.500" cy="9" r="4.500" fill="#3aa0f0" stroke="#0a5098"/>'),
    sDraft: blue('M1 4l4-3h6l4 12-3 2H1z', '<path d="M9 4l2-3 5 13-4 1z" fill="#e02c1c"/>'),
    sThin: '<path d="M1 9l5-5h9l-4 5z" fill="#e02c1c" stroke="#801010" stroke-width=".6"/><path d="M1 9h10l4-5v4l-4 5H1z" fill="#2a8fe8"/>',
    sBlock: blue('M1 4l3-3h11v11l-3 3H1z', '<path d="M1 4h11v11H1z" fill="#0c48a8"/>'),
    sPush: blue('M1 8l3-3h11v7l-3 3H1z', '<path d="M7 5l5-5 3 2-5 5z" fill="#e86030"/>'),
    sGrid: '<path d="M1 4l3-3h11v11l-3 3H1z" fill="#2a70b8" stroke="#0c3468"/><path d="M1 4h11v11M12 4l3-3M6.500 4v11M1 9h11" fill="none" stroke="#0c2c58"/>',
    sRotate: blue('M4 2l9-1 2 7-5 5-6-2z', '<path d="M1 8c2 6 8 8 12 5M1 8v5" fill="none" stroke="#3898e0" stroke-width="1.600"/>'),
    sLayout: '<path d="M1 1h14v14H1z" fill="#d8ecf8" stroke="#1c6ca8" stroke-width="1.600"/><path d="M4 8h4v4H4zM10 4h3v8h-3zM4 6c1-3 3-3 4 0" fill="none" stroke="#1c6ca8"/>',
    sTiles: '<path d="M1 1h14v14H1z" fill="#d8ecf8" stroke="#1c6ca8" stroke-width="1.600"/><path d="M4 4h3v3H4zM9 4h3v3H9zM4 9h3v3H4zM9 9h3v3H9z" fill="#fff" stroke="#103c78"/>',
    sRed: '<path d="M1 6l5-5 5 2 4 5-5 6-8-1z" fill="#c01830" stroke="#600c18"/><path d="M1 7l5 2v6l-5-2z" fill="#2078d0"/>',

    fitGray: '<path d="M1 5V1h4M11 1h4v4M15 11v4h-4M5 15H1v-4" fill="none" stroke="#2a8090" stroke-width="1.600"/><path d="M4 5l4 2 4-2-1 6-4 1-2-3z" fill="#9aa8c8" stroke="#5060a0"/>',
    tool: '<path d="M7 15l5-8 2 1-5 8z" fill="#d8a040"/><path d="M10 2l4 1 2 4-3 3-4-5z" fill="#404458"/><path d="M0 5h6M0 8h6M0 11h6" stroke="#222"/>',
    drill: '<path d="M3 1h10v3l-2 1v5H5V5L3 4z" fill="#2c2840"/><path d="M7 10h2v5h3M7 12h4" fill="none" stroke="#d0a818" stroke-width="1.800"/>',
    gCar: gray('M4 6l3-4h5l3 5v6H9l-1-2-2 2H3zM0 8l5-5-1 4h3L1 12z'),
    gPlus: gray('M6 2h5v4h5v5h-5v4H6v-4H2V6h4z') + gray('M0 8l5-5-1 4h3L1 12z'),
    gLine: grayLine('M5 14L13 3M1 7l5-5M2 8l5-3-5 7M13 4h3M3 15h4'),
    gArc: '<circle cx="9" cy="9" r="5.500" fill="none" stroke="#a79f98" stroke-width="1.200"/>' + grayLine('M1 7l5-5M1 7h5l-4 5'),
    gFillet: grayLine('M6 10h8V3M1 7l5-5M1 7h5l-5 6M6 10v4', 1.6),
    gRect: gray('M1 1h4v1h6V1h4v4h-1v6h1v4h-4v-1H5v1H1v-4h1V5H1z'),
    gSolid: gray('M8 1l6 4 1 6-6 4-5-4z') + gray(bolt),
    gGlobe: '<circle cx="8" cy="8" r="6" fill="none" stroke="#a79f98"/>' + grayLine('M8 2v12M2 8h12M5 4v8M11 4v8M5 5h6M5 11h6M0 8l5-5', 1),
    gPair: gray('M9 1h6v6H9zM2 9h6v6H2z') + grayLine('M1 6l5-5M1 6h5l-5 5', 1.5),
    gBox: gray('M4 5h11v9H4z') + grayLine('M1 7l5-5M1 7h4l-4 5', 1.5),
    gSave: gray('M4 4h11v11H4z') + '<path d="M6 10h7v3H6z" fill="#f2e6e0"/>' + grayLine('M1 7l5-5M1 7h4', 1.5),
    gDim: grayLine('M1 3v12M15 3v12M2 10h12M5 7l-3 3 3 3M11 7l3 3-3 3M3 5l4-4'),

    pRewind: gray('M2 2h2v12H2zM9 2v12L4 8zM14 2v12L9 8z'),
    pPlay: gray('M5 2l7 6-7 6z'),
    pStop: '<path d="M2 2h12v12H2z" fill="#000"/>',
    pStep: gray('M3 2h2v12H3zM7 2l7 6-7 6z'),
    pFast: gray('M2 2l6 6-6 6zM8 2l7 6-7 6z'),
    mTurbo: '<circle cx="8" cy="8" r="7" fill="none" stroke="#a79f98"/><circle cx="8" cy="6" r="2.300" fill="none" stroke="#a79f98"/><circle cx="8" cy="9.500" r="2.800" fill="none" stroke="#a79f98"/><path d="M5 8c2-3 5-3 6-1" fill="none" stroke="#a79f98" stroke-width=".8"/>',
    mTool: gray('M5 0h6v16H5z'),
    mHolder: gray('M1 0h14v4l-5 5v7H6V9L1 4z'),
    dCamera: gray('M1 4h3V2h3v2h3V2h3v2h2v11H1z'),
    dCut: grayLine('M14 2L6 10M13 7L5 10', 1.6) + grayLine('M5 9a2 2 0 1 0 .1 0M6 12a2 1.500 0 1 0 .1 0'),
    dRuler: grayLine('M1 1v13h14V1M4 6v8M7 4v10M10 6v8M13 4v10', 1.2),
    dZoom: grayLine('M1 1l14 14M1 14l4-3') + '<circle cx="8" cy="7" r="4" fill="none" stroke="#a79f98" stroke-width="1.400"/>' + gray('M9 9l5 1 1 5z'),
    dSave: gray('M1 2h14v10l-3 3H4l-3-3z') + '<path d="M8 3h6v6H8z" fill="#f3e8e0"/>',
    walk: '<circle cx="8" cy="2.500" r="1.500"/><path d="M8 4v6M8 5l-4 3v2M8 5l4 4M8 9l-3 5M8 9l3 5" fill="none" stroke="#000" stroke-width="1.300"/>',
    run: '<circle cx="12" cy="2.500" r="2"/><path d="M10 4L7 9l4 2v4M8 9l-4 4H1M5 5l4-1 3 3 3-1" fill="none" stroke="#000" stroke-width="2"/><path d="M3 1h5M1 4h3M0 8h4" stroke="#000"/>',
    ok: '<path d="M2 9l3-1 2 3 6-10h2L8 15H6z" fill="#3cc82c" stroke="#17741a" stroke-width=".8"/>',
    cancel: '<path d="M1 4l3-3 4 4 4-4 3 2-4 5 4 5-3 3-4-4-4 4-3-3 4-5z" fill="#ec3c18" stroke="#98200c" stroke-width=".8"/>'
};

const defs = '<svg class="shared-defs" width="0" height="0" style="position:absolute"><defs>' +
    '<linearGradient id="bluefill" x2="1" y2="1"><stop stop-color="#6cc0ff"/><stop offset=".5" stop-color="#1e88e8"/><stop offset="1" stop-color="#0c58b0"/></linearGradient>' +
    '<linearGradient id="greenfill"><stop stop-color="#1c6c28"/><stop offset=".5" stop-color="#8cd890"/><stop offset="1" stop-color="#1c6c28"/></linearGradient>' +
    '</defs></svg>';
document.body.insertAdjacentHTML('beforeend', defs);

function draw(name) {
    return `<svg viewBox="0 0 16 16">${icons[name]}</svg>`;
}

document.querySelectorAll('[data-icons]').forEach(bar => {
    bar.innerHTML = bar.dataset.icons.split(' ').map(item => {
        if (item === '|') {
            return '<span class="sep"></span>';
        }
        const name = item.replace('*', '');
        const drop = item.endsWith('*') ? `<button class="drop" aria-label="${name} menu"></button>` : '';
        return `<button class="tool" aria-label="${name}">${draw(name)}</button>${drop}`;
    }).join('');
});

document.querySelectorAll('[data-icon]').forEach(btn => {
    btn.innerHTML = draw(btn.dataset.icon);
});

document.getElementById('zdepth').select();
```
